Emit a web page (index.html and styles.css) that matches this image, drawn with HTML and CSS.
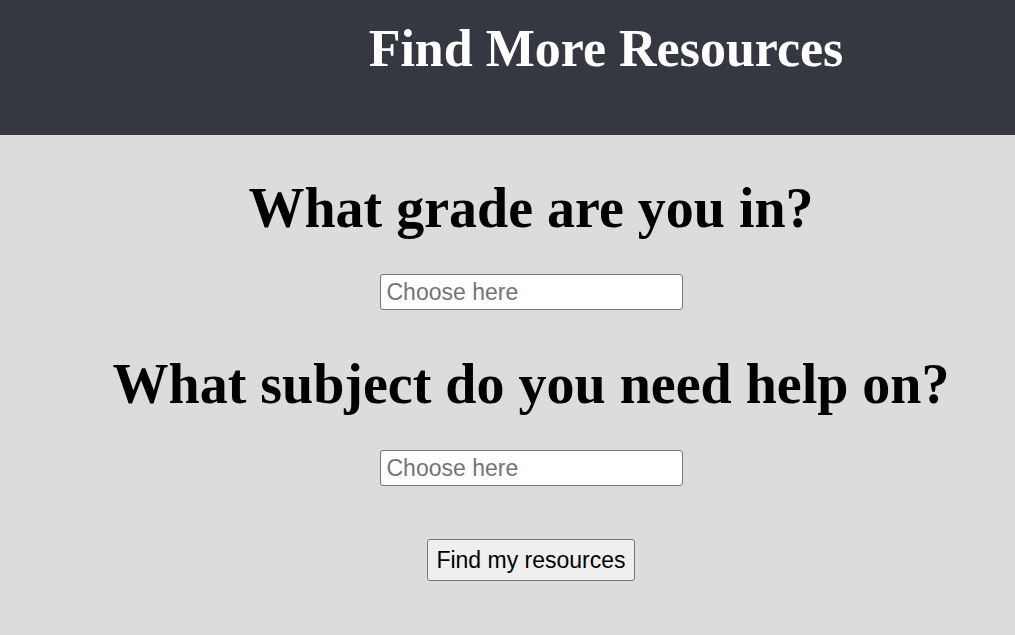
FILE: index.html
```html
<!DOCTYPE html>
<html>
<head>
<meta charset="utf-8">
<link rel="stylesheet" href="styles.css">
</head>
<body>
<header class="top">
  <h1 class="title">Find More Resources</h1>
</header>
<main class="form">
  <h2 class="question">What grade are you in?</h2>
  <input class="choice" type="text" placeholder="Choose here">
  <h2 class="question">What subject do you need help on?</h2>
  <input class="choice" type="text" placeholder="Choose here">
  <button class="submit" type="button">Find my resources</button>
</main>
</body>
</html>
```

FILE: styles.css
```css
html, body {
  margin: 0;
  padding: 0;
  background: #dcdcdc;
  font-family: "Liberation Serif", "Times New Roman", serif;
}
.top {
  background: #353841;
  height: 135px;
  display: flex;
  justify-content: center;
  padding-left: 197px;
  box-sizing: border-box;
}
.title {
  margin: 19px 0 0;
  color: #ffffff;
  font-size: 52px;
  font-weight: bold;
  line-height: 60px;
}
.form {
  display: flex;
  flex-direction: column;
  align-items: center;
  padding-left: 47px;
}
.question {
  margin: 38px 0 0;
  font-size: 56px;
  font-weight: bold;
  line-height: 70px;
  color: #000;
}
.choice {
  margin-top: 31px;
  margin-bottom: 1px;
  width: 303px;
  height: 36px;
  box-sizing: border-box;
  font-family: "Liberation Sans", Arial, sans-serif;
  font-size: 23px;
  padding: 2px 6px;
  border: 1px solid #767676;
  border-radius: 3px;
  background: #fff;
}
.choice::placeholder {
  color: #757575;
}
.submit {
  margin-top: 52px;
  height: 42px;
  padding: 0 8px;
  font-family: "Liberation Sans", Arial, sans-serif;
  font-size: 23px;
  color: #000;
  background: #efefef;
  border: 1px solid #767676;
  border-radius: 3px;
}
```
